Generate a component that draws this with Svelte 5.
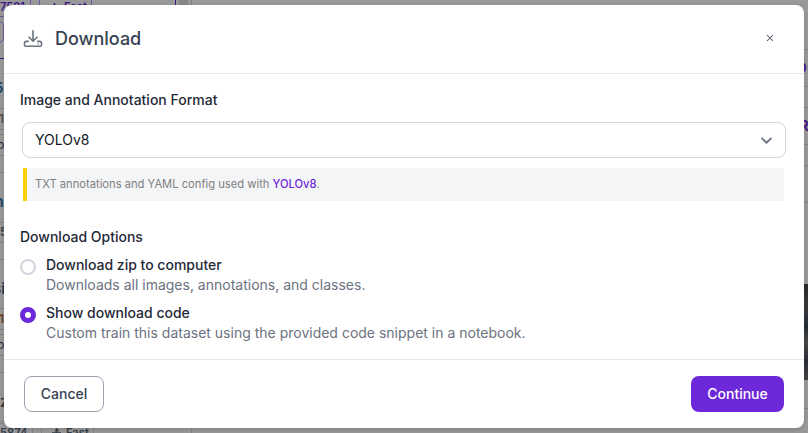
<script>
  let selected = $state('code');
  const options = [
    { id: 'zip', title: 'Download zip to computer', detail: 'Downloads all images, annotations, and classes.' },
    { id: 'code', title: 'Show download code', detail: 'Custom train this dataset using the provided code snippet in a notebook.' }
  ];
  const leftRules = [108, 129, 134, 155, 172, 222, 242, 259, 308, 329, 334, 355, 372, 421];
  const rightRules = [49, 86, 107, 144, 165, 202, 408];
  const fragments = [
    { t: '5', x: -6, y: 79, s: 15, c: '#1b4965', w: 600 },
    { t: '1', x: -1, y: 112, s: 12, c: '#4b4340', w: 500 },
    { t: 'p', x: -3, y: 138, s: 12, c: '#30384a', w: 500 },
    { t: 'n', x: -6, y: 192, s: 16, c: '#1d4968', w: 600 },
    { t: '15', x: -5, y: 225, s: 12, c: '#30384a', w: 600 },
    { t: 'si', x: -7, y: 280, s: 15, c: '#24364e', w: 600 },
    { t: '1', x: -1, y: 312, s: 12, c: '#684123', w: 600 },
    { t: 'p', x: -3, y: 338, s: 12, c: '#30384a', w: 500 },
    { t: 'z', x: 0, y: 393, s: 15, c: '#40342e', w: 600 },
    { t: 'D', x: 796, y: 59, s: 15, c: '#421589', w: 600 },
    { t: 'R', x: 799, y: 117, s: 15, c: '#421589', w: 600 }
  ];
</script>

{#snippet speed()}
  <svg class="speed" width="11" height="10" viewBox="0 0 11 10" fill="none" stroke="currentColor" stroke-width="1.4"><path d="M1 6h9M4 3.5h4M5.5 1v5M2 9l2-3M8 9V6" /></svg>
{/snippet}

<div class="page">
  <div class="backdrop" aria-hidden="true">
    {#each leftRules as y}<i class="rule left" style="top:{y}px"></i>{/each}
    {#each rightRules as y}<i class="rule right" style="top:{y}px"></i>{/each}
    {#each fragments as f}
      <span style="left:{f.x}px;top:{f.y}px;font-size:{f.s}px;color:{f.c};font-weight:{f.w}">{f.t}</span>
    {/each}
    <div class="tags top"><b class="version">7521</b><b class="mode">{@render speed()}Fast</b></div>
    <i class="divider"></i><i class="gutter"></i>
    <i class="chip"></i><i class="underline"></i><i class="thumbnail"></i>
    <div class="tags bottom"><b class="version">5874</b><b class="mode">{@render speed()}Fast</b></div>
    <i class="end"></i>
  </div>

  <div class="modal" role="dialog" aria-label="Download">
    <header>
      <svg width="20" height="20" viewBox="0 0 20 20" fill="none" stroke="#6b7280" stroke-width="1.6" stroke-linecap="round" stroke-linejoin="round">
        <path d="M10 1.7v10.4M6 8.3l4 3.9 4-3.9" />
        <path d="M5.2 12.4H3.2q-1.7 0-1.7 1.7v1.9q0 1.3 1.3 1.3h14.4q1.3 0 1.3-1.3v-1.9q0-1.7-1.7-1.7h-2" />
        <path d="M15.2 14.9h.1" stroke-width="1.3" />
      </svg>
      <h1>Download</h1>
      <button class="close" aria-label="Close">
        <svg width="8" height="8" viewBox="0 0 8 8" stroke="#4b5563" stroke-width="1.05"><path d="M1 1l6 6M7 1L1 7" /></svg>
      </button>
    </header>
    <main>
      <h2>Image and Annotation Format</h2>
      <button class="select">
        <span>YOLOv8</span>
        <svg width="12" height="8" viewBox="0 0 12 8" fill="none" stroke="#6b7280" stroke-width="1.8"><path d="M1.5 1.9l5 4.8 5-4.8" /></svg>
      </button>
      <p class="note">TXT annotations and YAML config used with <strong>YOLOv8</strong>.</p>
      <h2 class="options-title">Download Options</h2>
      {#each options as o}
        <button class="option" onclick={() => (selected = o.id)}>
          <i class="radio" class:checked={selected === o.id}></i>
          <span class="copy"><span class="title">{o.title}</span><span class="detail">{o.detail}</span></span>
        </button>
      {/each}
    </main>
    <footer>
      <button class="cancel">Cancel</button>
      <button class="continue">Continue</button>
    </footer>
  </div>
</div>

<style>
  :global(body) { overflow: hidden; }
  * { box-sizing: border-box; }
  .page { position: relative; width: 808px; height: 433px; padding: 5px 4px; overflow: hidden; background: #999; font-family: Inter, sans-serif; }
  button { font: inherit; padding: 0; background: none; border: 0; cursor: pointer; }
  .backdrop { position: absolute; inset: 0; overflow: hidden; }
  .backdrop > i, .backdrop > span { position: absolute; line-height: 1.2; }
  .rule { width: 5px; height: 1px; background: #838485; }
  .rule.left { left: 0; }
  .rule.right { right: 0; }
  .tags { position: absolute; left: 0; display: flex; height: 19px; gap: 8px; font-size: 11.2px; line-height: 15px; color: #421589; }
  .tags b { display: flex; height: 19px; border: 1px solid #7456a0; font-weight: 600; }
  .tags.top { top: -2px; line-height: 16px; }
  .tags.bottom { top: 423px; line-height: 18px; color: #343d49; }
  .tags.bottom b { border-color: #818488; }
  .version { width: 31px; border-left: 0 !important; }
  .mode { width: 53px; padding-left: 9px; gap: 4px; }
  .bottom .version { width: 33px; }
  .speed { margin-top: 3px; }
  .divider { left: 175px; top: 0; width: 1px; height: 8px; background: #421589; }
  .gutter { left: 179px; top: 0; width: 13px; height: 8px; background: linear-gradient(90deg, #858687 9px, #999 9px 12px, #7e7f80 12px); }
  .chip { left: -12px; top: 21px; width: 16px; height: 22px; border: 1px solid #7456a0; border-radius: 5px; }
  .underline { left: 0; top: 58px; width: 5px; height: 1px; background: #421589; }
  .thumbnail { right: 0; top: 284px; width: 5px; height: 96px; background: linear-gradient(#292a29, #393c3e 25%, #252c33 45%, #4b4b45 60%, #292d37 80%, #454545); }
  .end { left: 191px; top: 427px; width: 1px; height: 6px; background: #818488; }
  .modal { position: relative; display: flex; flex-direction: column; width: 800px; height: 423px; border-radius: 8px; background: #fff; overflow: hidden; box-shadow: 0 2px 5px rgba(0, 0, 0, .14); }
  header { display: flex; align-items: center; height: 69px; padding: 0 29px 0 19px; border-bottom: 1px solid #e5e7eb; }
  h1 { margin: 0 auto 0 12px; font-size: 18px; line-height: 28px; font-weight: 500; color: #374151; }
  .close { display: flex; padding: 1px; margin-bottom: 2px; }
  main { display: flex; flex-direction: column; flex: 1; padding: 16px 16px 0; }
  h2 { margin: 0; font-size: 14px; line-height: 20px; font-weight: 500; color: #1f2937; }
  .select { display: flex; align-items: center; justify-content: space-between; width: 764px; height: 36px; margin: 12px 0 0 2px; padding: 0 13px 0 12px; border: 1px solid #d1d5db; border-radius: 8px; font-size: 14px; color: #111827; }
  .select span { line-height: 20px; padding-bottom: 1px; }
  .note { width: 761px; height: 33px; margin: 10px 0 0 3px; padding-left: 8px; border-left: 4px solid #ffcd00; border-radius: 0 2px 2px 0; background: #f4f5f7; font-size: 11.2px; line-height: 33px; color: #808080; }
  strong { font-weight: 500; color: #6d28d9; }
  .options-title { margin: 26px 0 8px; }
  .option { display: flex; height: 40px; margin-bottom: 8px; gap: 10px; text-align: left; }
  .radio { width: 16px; height: 16px; margin-top: 4px; border: 2px solid #d1d5db; border-radius: 50%; }
  .radio.checked { border: 5px solid #6d28d9; }
  .copy { display: flex; flex-direction: column; font-size: 14px; line-height: 20px; }
  .title { color: #1f2937; font-weight: 500; }
  .detail { color: #6b7280; }
  footer { display: flex; align-items: center; justify-content: space-between; height: 69px; padding: 0 20px; border-top: 1px solid #e5e7eb; }
  footer button { height: 36px; border-radius: 8px; font-size: 14px; line-height: 20px; font-weight: 500; }
  .cancel { width: 80px; border: 1px solid #9ca3af; color: #374151; }
  .continue { width: 93px; background: #6d28d9; color: #fff; }
</style>
